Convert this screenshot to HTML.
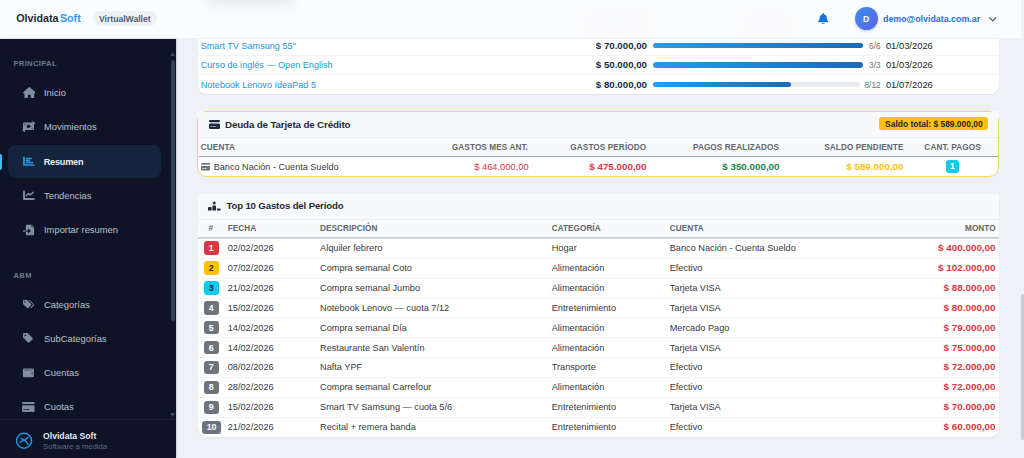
<!DOCTYPE html>
<html><head><meta charset="utf-8"><title>Resumen</title>
<style>
html,body{margin:0;padding:0}
body{width:1024px;height:458px;overflow:hidden;position:relative;background:#eef2f6;font-family:"Liberation Sans",sans-serif}
.t{position:absolute;white-space:nowrap;line-height:1}
.b{position:absolute}
</style></head><body>
<div class="b" style="left:198.00px;top:-20.00px;width:801.00px;height:114.00px;background:#fff;border-radius:9px;box-shadow:0 1px 2px rgba(15,23,42,.06);"></div>
<div class="b" style="left:198.00px;top:54.50px;width:801.00px;height:1.00px;background:#f1f3f5;"></div>
<div class="b" style="left:198.00px;top:74.00px;width:801.00px;height:1.00px;background:#f1f3f5;"></div>
<div class="t" style="top:42.00px;font-size:9.1px;font-weight:400;color:#2195e3;left:200.70px;">Smart TV Samsung 55"</div>
<div class="t" style="top:41.00px;font-size:9.7px;font-weight:700;color:#1e293b;right:377.00px;">$ 70.000,00</div>
<div class="b" style="left:652.60px;top:42.60px;width:210.80px;height:5.60px;background:#e9ecef;border-radius:3px;"></div>
<div class="b" style="left:652.60px;top:42.60px;width:210.70px;height:5.60px;background:linear-gradient(90deg,#2b9be3,#1b6ab5);border-radius:3px;"></div>
<div class="t" style="top:43.00px;font-size:8.2px;font-weight:400;color:#6c757d;right:143.50px;">6/6</div>
<div class="t" style="top:41.00px;font-size:9.4px;font-weight:400;color:#212529;left:885.90px;">01/03/2026</div>
<div class="t" style="top:61.00px;font-size:9.1px;font-weight:400;color:#2195e3;left:200.70px;">Curso de inglés — Open English</div>
<div class="t" style="top:60.00px;font-size:9.7px;font-weight:700;color:#1e293b;right:377.00px;">$ 50.000,00</div>
<div class="b" style="left:652.60px;top:62.00px;width:210.80px;height:5.60px;background:#e9ecef;border-radius:3px;"></div>
<div class="b" style="left:652.60px;top:62.00px;width:210.70px;height:5.60px;background:linear-gradient(90deg,#2b9be3,#1b6ab5);border-radius:3px;"></div>
<div class="t" style="top:62.00px;font-size:8.2px;font-weight:400;color:#6c757d;right:143.50px;">3/3</div>
<div class="t" style="top:60.00px;font-size:9.4px;font-weight:400;color:#212529;left:885.90px;">01/03/2026</div>
<div class="t" style="top:81.00px;font-size:9.1px;font-weight:400;color:#2195e3;left:200.70px;">Notebook Lenovo IdeaPad 5</div>
<div class="t" style="top:80.00px;font-size:9.7px;font-weight:700;color:#1e293b;right:377.00px;">$ 80.000,00</div>
<div class="b" style="left:652.60px;top:81.80px;width:207.40px;height:5.60px;background:#e9ecef;border-radius:3px;"></div>
<div class="b" style="left:652.60px;top:81.80px;width:138.20px;height:5.60px;background:linear-gradient(90deg,#2b9be3,#1b6ab5);border-radius:3px;"></div>
<div class="t" style="top:82.00px;font-size:8.2px;font-weight:400;color:#6c757d;right:143.50px;">8/12</div>
<div class="t" style="top:80.00px;font-size:9.4px;font-weight:400;color:#212529;left:885.90px;">01/07/2026</div>
<div class="b" style="left:197px;top:111px;width:802px;height:66px;border:1px solid #f5d36b;border-radius:10px;background:#fff;box-sizing:border-box;overflow:hidden"><div style="position:absolute;left:0;top:0;right:0;height:45px;background:#f8f9fb"></div></div>
<div class="b" style="left:197.00px;top:111.00px;width:8.00px;height:8.00px;background:#f8f9fb;border-radius:2px;"></div>
<div class="b" style="left:991.00px;top:111.00px;width:8.00px;height:8.00px;background:#f8f9fb;border-radius:2px;"></div>
<div class="b" style="left:198.50px;top:136.60px;width:799.50px;height:1.00px;background:#eceef1;"></div>
<div class="b" style="left:198.50px;top:155.80px;width:799.50px;height:1.20px;background:#9ea4aa;"></div>
<svg class="b" style="left:208.6px;top:119.8px" width="11" height="9" viewBox="0 0 11 9"><rect x="0" y="0" width="11" height="2.2" rx="1" fill="#1e293b"/><rect x="0" y="3.4" width="11" height="5.6" rx="1.2" fill="#1e293b"/><rect x="1.6" y="6" width="1.8" height=".8" fill="#cfd6df"/><rect x="4" y="6" width="2.6" height=".8" fill="#cfd6df"/></svg>
<div class="t" style="top:120.00px;font-size:9.8px;font-weight:700;color:#1e293b;letter-spacing:-0.15px;left:225.00px;">Deuda de Tarjeta de Crédito</div>
<div class="b" style="left:879.30px;top:117.00px;width:108.90px;height:13.30px;background:#ffc107;border-radius:3px;"></div>
<div class="t" style="top:120.00px;font-size:8.45px;font-weight:700;color:#212529;left:933.90px;transform:translateX(-50%);">Saldo total: $ 589.000,00</div>
<div class="t" style="top:144.00px;font-size:8.2px;font-weight:700;color:#62676e;letter-spacing:0.1px;left:200.80px;">CUENTA</div>
<div class="t" style="top:144.00px;font-size:8.2px;font-weight:700;color:#62676e;letter-spacing:0.1px;right:496.00px;">GASTOS MES ANT.</div>
<div class="t" style="top:144.00px;font-size:8.2px;font-weight:700;color:#62676e;letter-spacing:0.1px;right:377.80px;">GASTOS PERÍODO</div>
<div class="t" style="top:144.00px;font-size:8.2px;font-weight:700;color:#62676e;letter-spacing:0.1px;right:245.00px;">PAGOS REALIZADOS</div>
<div class="t" style="top:144.00px;font-size:8.2px;font-weight:700;color:#62676e;letter-spacing:0.1px;right:120.50px;">SALDO PENDIENTE</div>
<div class="t" style="top:144.00px;font-size:8.2px;font-weight:700;color:#62676e;letter-spacing:0.1px;left:952.60px;transform:translateX(-50%);">CANT. PAGOS</div>
<svg class="b" style="left:200.8px;top:163px" width="9.5" height="7.5" viewBox="0 0 9.5 7.5"><rect x="0" y="0" width="9.5" height="7.5" rx="1.2" fill="#6b7280"/><rect x="0" y="1.6" width="9.5" height="1.4" fill="#fff"/><rect x="1.2" y="5" width="1.6" height=".7" fill="#fff"/><rect x="3.4" y="5" width="2.2" height=".7" fill="#fff"/></svg>
<div class="t" style="top:163.00px;font-size:9.1px;font-weight:400;color:#343a40;left:213.75px;">Banco Nación - Cuenta Sueldo</div>
<div class="t" style="top:163.00px;font-size:9.35px;font-weight:400;color:#dc3545;right:495.30px;">$ 464.000,00</div>
<div class="t" style="top:162.00px;font-size:9.8px;font-weight:700;color:#dc3545;right:377.50px;">$ 475.000,00</div>
<div class="t" style="top:162.00px;font-size:9.8px;font-weight:700;color:#198754;right:244.50px;">$ 350.000,00</div>
<div class="t" style="top:162.00px;font-size:9.8px;font-weight:700;color:#ffc107;right:120.50px;">$ 589.000,00</div>
<div class="b" style="left:945.70px;top:160.20px;width:13.30px;height:12.60px;background:#0dcaf0;border-radius:3px;"></div>
<div class="t" style="top:162.00px;font-size:8.8px;font-weight:700;color:#fff;left:952.35px;transform:translateX(-50%);">1</div>
<div class="b" style="left:198.00px;top:193.50px;width:801.00px;height:243.70px;background:#fff;border-radius:9px;box-shadow:0 1px 2px rgba(15,23,42,.06);overflow:hidden;"></div>
<div class="b" style="left:198.00px;top:193.50px;width:801.00px;height:44.90px;background:#f8f9fb;border-radius:2px 2px 0 0;"></div>
<div class="b" style="left:198.00px;top:219.00px;width:801.00px;height:1.00px;background:#eceef1;"></div>
<div class="b" style="left:198.00px;top:236.90px;width:801.00px;height:1.70px;background:#d0d4d8;"></div>
<svg class="b" style="left:208.4px;top:201.4px" width="12.5" height="9.6" viewBox="0 0 12.5 9.6"><path d="M6.2 0 L6.9 1.3 L8.3 1.5 L7.3 2.4 L7.5 3.7 L6.2 3.1 L5 3.7 L5.2 2.4 L4.2 1.5 L5.6 1.3Z" fill="#1e293b"/><rect x="0" y="6" width="3.6" height="3.6" rx=".5" fill="#1e293b"/><rect x="4.4" y="4.6" width="3.6" height="5" rx=".5" fill="#1e293b"/><rect x="8.9" y="7.6" width="3.6" height="2" rx=".5" fill="#1e293b"/></svg>
<div class="t" style="top:201.00px;font-size:9.6px;font-weight:700;color:#1e293b;letter-spacing:-0.13px;left:226.40px;">Top 10 Gastos del Período</div>
<div class="t" style="top:225.00px;font-size:8.2px;font-weight:700;color:#62676e;left:208.40px;">#</div>
<div class="t" style="top:225.00px;font-size:8.2px;font-weight:700;color:#62676e;letter-spacing:0.05px;left:227.70px;">FECHA</div>
<div class="t" style="top:225.00px;font-size:8.2px;font-weight:700;color:#62676e;letter-spacing:0.05px;left:320.00px;">DESCRIPCIÓN</div>
<div class="t" style="top:225.00px;font-size:8.2px;font-weight:700;color:#62676e;letter-spacing:0.05px;left:551.70px;">CATEGORÍA</div>
<div class="t" style="top:225.00px;font-size:8.2px;font-weight:700;color:#62676e;letter-spacing:0.1px;left:669.70px;">CUENTA</div>
<div class="t" style="top:225.00px;font-size:8.2px;font-weight:700;color:#62676e;letter-spacing:0.05px;right:28.40px;">MONTO</div>
<div class="b" style="left:203.70px;top:241.40px;width:15.20px;height:13.50px;background:#dc3545;border-radius:3px;"></div>
<div class="t" style="top:244.00px;font-size:8.8px;font-weight:700;color:#fff;left:211.30px;transform:translateX(-50%);">1</div>
<div class="t" style="top:244.00px;font-size:9.2px;font-weight:400;color:#343a40;left:227.70px;">02/02/2026</div>
<div class="t" style="top:244.00px;font-size:9.2px;font-weight:400;color:#343a40;left:320.00px;">Alquiler febrero</div>
<div class="t" style="top:244.00px;font-size:9.2px;font-weight:400;color:#343a40;left:551.70px;">Hogar</div>
<div class="t" style="top:244.00px;font-size:9.2px;font-weight:400;color:#343a40;left:669.70px;">Banco Nación - Cuenta Sueldo</div>
<div class="t" style="top:243.00px;font-size:9.9px;font-weight:700;color:#dc3545;right:28.40px;">$ 400.000,00</div>
<div class="b" style="left:198.00px;top:257.79px;width:801.00px;height:1.00px;background:#f1f3f5;"></div>
<div class="b" style="left:203.70px;top:261.29px;width:15.20px;height:13.50px;background:#ffc107;border-radius:3px;"></div>
<div class="t" style="top:264.00px;font-size:8.8px;font-weight:700;color:#212529;left:211.30px;transform:translateX(-50%);">2</div>
<div class="t" style="top:264.00px;font-size:9.2px;font-weight:400;color:#343a40;left:227.70px;">07/02/2026</div>
<div class="t" style="top:264.00px;font-size:9.2px;font-weight:400;color:#343a40;left:320.00px;">Compra semanal Coto</div>
<div class="t" style="top:264.00px;font-size:9.2px;font-weight:400;color:#343a40;left:551.70px;">Alimentación</div>
<div class="t" style="top:264.00px;font-size:9.2px;font-weight:400;color:#343a40;left:669.70px;">Efectivo</div>
<div class="t" style="top:263.00px;font-size:9.9px;font-weight:700;color:#dc3545;right:28.40px;">$ 102.000,00</div>
<div class="b" style="left:198.00px;top:277.68px;width:801.00px;height:1.00px;background:#f1f3f5;"></div>
<div class="b" style="left:203.70px;top:281.18px;width:15.20px;height:13.50px;background:#0dcaf0;border-radius:3px;"></div>
<div class="t" style="top:284.00px;font-size:8.8px;font-weight:700;color:#212529;left:211.30px;transform:translateX(-50%);">3</div>
<div class="t" style="top:284.00px;font-size:9.2px;font-weight:400;color:#343a40;left:227.70px;">21/02/2026</div>
<div class="t" style="top:284.00px;font-size:9.2px;font-weight:400;color:#343a40;left:320.00px;">Compra semanal Jumbo</div>
<div class="t" style="top:284.00px;font-size:9.2px;font-weight:400;color:#343a40;left:551.70px;">Alimentación</div>
<div class="t" style="top:284.00px;font-size:9.2px;font-weight:400;color:#343a40;left:669.70px;">Tarjeta VISA</div>
<div class="t" style="top:283.00px;font-size:9.9px;font-weight:700;color:#dc3545;right:28.40px;">$ 88.000,00</div>
<div class="b" style="left:198.00px;top:297.57px;width:801.00px;height:1.00px;background:#f1f3f5;"></div>
<div class="b" style="left:203.70px;top:301.07px;width:15.20px;height:13.50px;background:#6c757d;border-radius:3px;"></div>
<div class="t" style="top:304.00px;font-size:8.8px;font-weight:700;color:#fff;left:211.30px;transform:translateX(-50%);">4</div>
<div class="t" style="top:304.00px;font-size:9.2px;font-weight:400;color:#343a40;left:227.70px;">15/02/2026</div>
<div class="t" style="top:304.00px;font-size:9.2px;font-weight:400;color:#343a40;left:320.00px;">Notebook Lenovo — cuota 7/12</div>
<div class="t" style="top:304.00px;font-size:9.2px;font-weight:400;color:#343a40;left:551.70px;">Entretenimiento</div>
<div class="t" style="top:304.00px;font-size:9.2px;font-weight:400;color:#343a40;left:669.70px;">Tarjeta VISA</div>
<div class="t" style="top:303.00px;font-size:9.9px;font-weight:700;color:#dc3545;right:28.40px;">$ 80.000,00</div>
<div class="b" style="left:198.00px;top:317.46px;width:801.00px;height:1.00px;background:#f1f3f5;"></div>
<div class="b" style="left:203.70px;top:320.96px;width:15.20px;height:13.50px;background:#6c757d;border-radius:3px;"></div>
<div class="t" style="top:324.00px;font-size:8.8px;font-weight:700;color:#fff;left:211.30px;transform:translateX(-50%);">5</div>
<div class="t" style="top:324.00px;font-size:9.2px;font-weight:400;color:#343a40;left:227.70px;">14/02/2026</div>
<div class="t" style="top:324.00px;font-size:9.2px;font-weight:400;color:#343a40;left:320.00px;">Compra semanal Día</div>
<div class="t" style="top:324.00px;font-size:9.2px;font-weight:400;color:#343a40;left:551.70px;">Alimentación</div>
<div class="t" style="top:324.00px;font-size:9.2px;font-weight:400;color:#343a40;left:669.70px;">Mercado Pago</div>
<div class="t" style="top:323.00px;font-size:9.9px;font-weight:700;color:#dc3545;right:28.40px;">$ 79.000,00</div>
<div class="b" style="left:198.00px;top:337.35px;width:801.00px;height:1.00px;background:#f1f3f5;"></div>
<div class="b" style="left:203.70px;top:340.85px;width:15.20px;height:13.50px;background:#6c757d;border-radius:3px;"></div>
<div class="t" style="top:344.00px;font-size:8.8px;font-weight:700;color:#fff;left:211.30px;transform:translateX(-50%);">6</div>
<div class="t" style="top:344.00px;font-size:9.2px;font-weight:400;color:#343a40;left:227.70px;">14/02/2026</div>
<div class="t" style="top:344.00px;font-size:9.2px;font-weight:400;color:#343a40;left:320.00px;">Restaurante San Valentín</div>
<div class="t" style="top:344.00px;font-size:9.2px;font-weight:400;color:#343a40;left:551.70px;">Alimentación</div>
<div class="t" style="top:344.00px;font-size:9.2px;font-weight:400;color:#343a40;left:669.70px;">Tarjeta VISA</div>
<div class="t" style="top:343.00px;font-size:9.9px;font-weight:700;color:#dc3545;right:28.40px;">$ 75.000,00</div>
<div class="b" style="left:198.00px;top:357.24px;width:801.00px;height:1.00px;background:#f1f3f5;"></div>
<div class="b" style="left:203.70px;top:360.74px;width:15.20px;height:13.50px;background:#6c757d;border-radius:3px;"></div>
<div class="t" style="top:363.00px;font-size:8.8px;font-weight:700;color:#fff;left:211.30px;transform:translateX(-50%);">7</div>
<div class="t" style="top:363.00px;font-size:9.2px;font-weight:400;color:#343a40;left:227.70px;">08/02/2026</div>
<div class="t" style="top:363.00px;font-size:9.2px;font-weight:400;color:#343a40;left:320.00px;">Nafta YPF</div>
<div class="t" style="top:363.00px;font-size:9.2px;font-weight:400;color:#343a40;left:551.70px;">Transporte</div>
<div class="t" style="top:363.00px;font-size:9.2px;font-weight:400;color:#343a40;left:669.70px;">Efectivo</div>
<div class="t" style="top:362.00px;font-size:9.9px;font-weight:700;color:#dc3545;right:28.40px;">$ 72.000,00</div>
<div class="b" style="left:198.00px;top:377.13px;width:801.00px;height:1.00px;background:#f1f3f5;"></div>
<div class="b" style="left:203.70px;top:380.63px;width:15.20px;height:13.50px;background:#6c757d;border-radius:3px;"></div>
<div class="t" style="top:383.00px;font-size:8.8px;font-weight:700;color:#fff;left:211.30px;transform:translateX(-50%);">8</div>
<div class="t" style="top:383.00px;font-size:9.2px;font-weight:400;color:#343a40;left:227.70px;">28/02/2026</div>
<div class="t" style="top:383.00px;font-size:9.2px;font-weight:400;color:#343a40;left:320.00px;">Compra semanal Carrefour</div>
<div class="t" style="top:383.00px;font-size:9.2px;font-weight:400;color:#343a40;left:551.70px;">Alimentación</div>
<div class="t" style="top:383.00px;font-size:9.2px;font-weight:400;color:#343a40;left:669.70px;">Efectivo</div>
<div class="t" style="top:382.00px;font-size:9.9px;font-weight:700;color:#dc3545;right:28.40px;">$ 72.000,00</div>
<div class="b" style="left:198.00px;top:397.02px;width:801.00px;height:1.00px;background:#f1f3f5;"></div>
<div class="b" style="left:203.70px;top:400.52px;width:15.20px;height:13.50px;background:#6c757d;border-radius:3px;"></div>
<div class="t" style="top:403.00px;font-size:8.8px;font-weight:700;color:#fff;left:211.30px;transform:translateX(-50%);">9</div>
<div class="t" style="top:403.00px;font-size:9.2px;font-weight:400;color:#343a40;left:227.70px;">15/02/2026</div>
<div class="t" style="top:403.00px;font-size:9.2px;font-weight:400;color:#343a40;left:320.00px;">Smart TV Samsung — cuota 5/6</div>
<div class="t" style="top:403.00px;font-size:9.2px;font-weight:400;color:#343a40;left:551.70px;">Entretenimiento</div>
<div class="t" style="top:403.00px;font-size:9.2px;font-weight:400;color:#343a40;left:669.70px;">Tarjeta VISA</div>
<div class="t" style="top:402.00px;font-size:9.9px;font-weight:700;color:#dc3545;right:28.40px;">$ 70.000,00</div>
<div class="b" style="left:198.00px;top:416.91px;width:801.00px;height:1.00px;background:#f1f3f5;"></div>
<div class="b" style="left:201.90px;top:420.51px;width:19.00px;height:13.30px;background:#6c757d;border-radius:3px;"></div>
<div class="t" style="top:423.00px;font-size:8.8px;font-weight:700;color:#fff;letter-spacing:-0.2px;left:211.40px;transform:translateX(-50%);">10</div>
<div class="t" style="top:423.00px;font-size:9.2px;font-weight:400;color:#343a40;left:227.70px;">21/02/2026</div>
<div class="t" style="top:423.00px;font-size:9.2px;font-weight:400;color:#343a40;left:320.00px;">Recital + remera banda</div>
<div class="t" style="top:423.00px;font-size:9.2px;font-weight:400;color:#343a40;left:551.70px;">Entretenimiento</div>
<div class="t" style="top:423.00px;font-size:9.2px;font-weight:400;color:#343a40;left:669.70px;">Efectivo</div>
<div class="t" style="top:422.00px;font-size:9.9px;font-weight:700;color:#dc3545;right:28.40px;">$ 60.000,00</div>
<div class="b" style="left:1021.00px;top:38.00px;width:3.00px;height:420.00px;background:#eef2f6;"></div>
<div class="b" style="left:1021.00px;top:294.00px;width:3.00px;height:146.00px;background:#c5ccd6;border-radius:2px;"></div>
<div class="b" style="left:0;top:0;width:1021px;height:39px;background:#fbfcfd;border-bottom:1px solid rgba(15,23,42,.05);box-sizing:border-box;overflow:hidden"><div style="position:absolute;left:206px;top:-7px;width:88px;height:14px;background:#eaecf0;filter:blur(5px);border-radius:7px"></div><div style="position:absolute;left:585px;top:14px;width:65px;height:14px;background:#f7f8fa;filter:blur(8px);border-radius:7px"></div><div style="position:absolute;left:745px;top:14px;width:45px;height:14px;background:#f7f8fa;filter:blur(8px);border-radius:7px"></div></div>
<div class="t" style="top:13.00px;font-size:10.7px;font-weight:700;color:#1e293b;left:16.25px;">Olvidata<span style="color:#2a9af0;margin-left:1.5px">Soft</span></div>
<div class="b" style="left:92.50px;top:11.25px;width:64.50px;height:14.75px;background:#eef2f6;border-radius:8px;"></div>
<div class="t" style="top:15.00px;font-size:8.6px;font-weight:700;color:#526072;left:124.80px;transform:translateX(-50%);">VirtualWallet</div>
<svg class="b" style="left:818.2px;top:12.8px" width="10.5" height="11.6" viewBox="0 0 448 512"><path fill="#1a73d9" d="M224 0c-17.7 0-32 14.3-32 32v19.2C119 66 64 130.6 64 208v18.8c0 47-17.3 92.4-48.5 127.6l-7.4 8.300C0 371.300-2 384.200 2.800 395.300S18.500 412 30.500 412h387c12 0 22.900-6.100 27.800-17.200s2.700-24-5.300-33l-7.400-8.300C401.300 318.300 384 273 384 226V208c0-77.400-55-142-128-156.800V32c0-17.700-14.300-32-32-32zm45.300 493.300c12-12 18.700-28.300 18.700-45.300H224 160c0 17 6.700 33.300 18.700 45.300S207 512 224 512s33.300-6.700 45.300-18.700z"/></svg>
<div class="b" style="left:854.70px;top:6.80px;width:23.00px;height:23.00px;border-radius:50%;background:linear-gradient(135deg,#3b8ff0,#5b62e3);box-shadow:0 1px 3px rgba(59,130,246,.35);"></div>
<div class="t" style="top:15.00px;font-size:8.6px;font-weight:700;color:#fff;left:866.20px;transform:translateX(-50%);">D</div>
<div class="t" style="top:15.00px;font-size:8.85px;font-weight:700;color:#1f6fd1;left:883.00px;">demo@olvidata.com.ar</div>
<svg class="b" style="left:989px;top:16.5px" width="7.5" height="5" viewBox="0 0 7.5 5"><path d="M.8 .9 L3.75 3.9 L6.7 .9" fill="none" stroke="#475569" stroke-width="1.3" stroke-linecap="round" stroke-linejoin="round"/></svg>
<div class="b" style="left:0;top:39px;width:176px;height:419px;background:#0e1425;box-shadow:1px 0 2px rgba(0,0,0,.15)"></div>
<svg class="b" style="left:170.3px;top:52px" width="5" height="4" viewBox="0 0 5 4"><path d="M2.5 0 L5 4 L0 4Z" fill="#3a4a60"/></svg>
<div class="b" style="left:170.60px;top:59.50px;width:4.00px;height:261.50px;background:#334155;border-radius:2px;"></div>
<svg class="b" style="left:170.3px;top:413px" width="5" height="4" viewBox="0 0 5 4"><path d="M0 0 L5 0 L2.5 4Z" fill="#3a4a60"/></svg>
<div class="t" style="top:60.00px;font-size:7.7px;font-weight:700;color:#6b7a90;letter-spacing:0.3px;left:13.40px;">PRINCIPAL</div>
<div class="t" style="top:272.00px;font-size:7.5px;font-weight:700;color:#6b7a90;letter-spacing:0.4px;left:13.50px;">ABM</div>
<div class="b" style="left:8.30px;top:144.80px;width:152.70px;height:32.80px;background:#13243d;border-radius:8px;"></div>
<div class="b" style="left:0.00px;top:153.50px;width:2.20px;height:16.00px;background:#38bdf8;border-radius:0 2px 2px 0;"></div>
<div class="t" style="top:88.00px;font-size:9.4px;font-weight:400;color:#b8c2cf;left:44.00px;">Inicio</div>
<div class="t" style="top:122.00px;font-size:9.4px;font-weight:400;color:#b8c2cf;left:44.00px;">Movimientos</div>
<div class="t" style="top:158.00px;font-size:9.2px;font-weight:700;color:#e8edf3;letter-spacing:-0.25px;left:43.70px;">Resumen</div>
<div class="t" style="top:191.00px;font-size:9.4px;font-weight:400;color:#b8c2cf;left:44.00px;">Tendencias</div>
<div class="t" style="top:225.00px;font-size:9.4px;font-weight:400;color:#b8c2cf;left:44.00px;">Importar resumen</div>
<div class="t" style="top:300.00px;font-size:9.4px;font-weight:400;color:#b8c2cf;left:44.00px;">Categorías</div>
<div class="t" style="top:334.00px;font-size:9.4px;font-weight:400;color:#b8c2cf;left:44.00px;">SubCategorías</div>
<div class="t" style="top:368.00px;font-size:9.4px;font-weight:400;color:#b8c2cf;left:44.00px;">Cuentas</div>
<div class="t" style="top:402.00px;font-size:9.4px;font-weight:400;color:#b8c2cf;left:44.00px;">Cuotas</div>
<svg class="b" style="left:22.5px;top:86.6px" width="12.6" height="11.4" viewBox="0 0 576 512"><path fill="#7f8ca1" d="M575.800 255.500c0 18-15 32.100-32 32.100h-32l.7 160.200c0 2.700-.2 5.400-.5 8.100V472c0 22.100-17.900 40-40 40H456c-1.100 0-2.200 0-3.300-.1-1.400 .1-2.800 .1-4.200 .1H416 392c-22.100 0-40-17.900-40-40V448 384c0-17.700-14.300-32-32-32H256c-17.700 0-32 14.300-32 32v64 24c0 22.100-17.900 40-40 40H160 128.100c-1.500 0-3-.1-4.500-.2-1.200 .1-2.400 .2-3.600 .2H104c-22.100 0-40-17.900-40-40V360c0-.9 0-1.900 .1-2.800V287.600H32c-18 0-32-14-32-32.100 0-9 3-17 10-24L266.400 8c7-7 15-8 22-8s15 2 21 7L564.800 231.500c8 7 12 15 11 24z"/></svg>
<svg class="b" style="left:22px;top:120.5px" width="13.5" height="11.5" viewBox="0 0 27 23"><rect x="2" y="3" width="22" height="15" rx="2" fill="#7f8ca1"/><circle cx="13" cy="10.5" r="3.6" fill="#0e1425"/><rect x="4.5" y="5.5" width="2.5" height="1.8" fill="#0e1425"/><rect x="19" y="13.5" width="2.5" height="1.8" fill="#0e1425"/><path d="M21 0 L27 4.5 L21 9Z" fill="#7f8ca1"/><path d="M6 14 L0 18.5 L6 23Z" fill="#7f8ca1"/></svg>
<svg class="b" style="left:20px;top:153px" width="18" height="16" viewBox="20 153 18 16"><path d="M24 157.3 V165 H33.6" fill="none" stroke="#2f9be8" stroke-width="1.7" stroke-linecap="round" stroke-linejoin="round"/><path d="M26.3 158.5 H31 M26.3 160.5 H29.4 M26.3 162.5 H32.6" fill="none" stroke="#2f9be8" stroke-width="1.3" stroke-linecap="round"/></svg>
<svg class="b" style="left:18px;top:184px" width="22" height="20" viewBox="18 184 22 20"><path d="M24 191.3 V199 H33.8" fill="none" stroke="#7f8ca1" stroke-width="1.9" stroke-linecap="round" stroke-linejoin="round"/><path d="M26.3 195.6 L28.5 193.5 L30.1 195 L33.1 192.4" fill="none" stroke="#7f8ca1" stroke-width="1.5" stroke-linecap="round" stroke-linejoin="round"/></svg>
<svg class="b" style="left:18px;top:218px" width="22" height="22" viewBox="18 218 22 22"><path d="M27.2 224.7 H31.8 L34.1 227 V233.9 Q34.1 235.3 32.7 235.3 H27.2 Q25.8 235.3 25.8 233.9 V226.1 Q25.8 224.7 27.2 224.7Z" fill="#7f8ca1"/><path d="M25.8 231 H29.3" stroke="#0e1425" stroke-width="1.3"/><path d="M28.2 228.4 L31 231 L28.2 233.6Z" fill="#0e1425"/><path d="M23 231 H25.8" stroke="#7f8ca1" stroke-width="1.3"/><path d="M31.8 224.7 V227 H34.1" fill="none" stroke="#0e1425" stroke-width=".6"/></svg>
<svg class="b" style="left:23px;top:299.5px" width="11.5" height="9.5" viewBox="0 0 23 19"><path d="M0 1.5 Q0 0 1.5 0 H8 L16 8 Q17 9.5 16 10.5 L10.5 16 Q9.5 17 8 16 L0 8Z" fill="#7f8ca1"/><circle cx="4" cy="4" r="1.5" fill="#0e1425"/><path d="M11 0 H13 L21.5 8.5 Q22.8 9.8 21.5 11 L15.5 17 L14.2 15.7 L19.8 10 Q20.5 9.5 19.8 8.8Z" fill="#7f8ca1"/></svg>
<svg class="b" style="left:23px;top:332.8px" width="10" height="10" viewBox="0 0 20 20"><path d="M0 1.8 Q0 0 1.8 0 H9 L19 10 Q20 11.3 19 12.3 L12.3 19 Q11.2 20 10 19 L0 9Z" fill="#7f8ca1"/><circle cx="4.7" cy="4.7" r="1.7" fill="#0e1425"/></svg>
<svg class="b" style="left:18px;top:362px" width="22" height="22" viewBox="18 362 22 22"><rect x="22.9" y="368.5" width="11" height="8.8" rx="1.3" fill="#7f8ca1"/><rect x="24" y="369.6" width="8.5" height=".9" fill="#0e1425" opacity=".45"/><rect x="31.4" y="372.6" width="1.4" height="1.4" fill="#0e1425" opacity=".6"/></svg>
<svg class="b" style="left:22.3px;top:402px" width="12.7" height="10" viewBox="0 0 25 20"><rect x="0" y="0" width="25" height="4" rx="1.5" fill="#7f8ca1"/><rect x="0" y="6.5" width="25" height="13.5" rx="2" fill="#7f8ca1"/><rect x="3" y="14" width="3.5" height="1.6" fill="#0e1425"/><rect x="8" y="14" width="5.5" height="1.6" fill="#0e1425"/></svg>
<div class="b" style="left:0.00px;top:419.00px;width:176.00px;height:1.00px;background:#1c2638;"></div>
<svg class="b" style="left:12px;top:428px" width="24" height="24" viewBox="12 428 24 24"><circle cx="24.05" cy="440.8" r="7.5" fill="none" stroke="#2196e6" stroke-width="1.4"/><path d="M20 442.3 Q22.5 440.3 25 439.8 Q26.8 438.8 28.2 437.3 M21.2 438.3 Q23.2 439.8 25 440.2 M25.2 440.3 Q26.8 442.5 28 444.3" fill="none" stroke="#2196e6" stroke-width="1.45" stroke-linecap="round"/></svg>
<div class="t" style="top:432.00px;font-size:8.67px;font-weight:700;color:#e2e8f0;left:43.00px;">Olvidata Soft</div>
<div class="t" style="top:443.00px;font-size:7.7px;font-weight:400;color:#5f6c80;left:43.00px;">Software a medida</div>
</body></html>
